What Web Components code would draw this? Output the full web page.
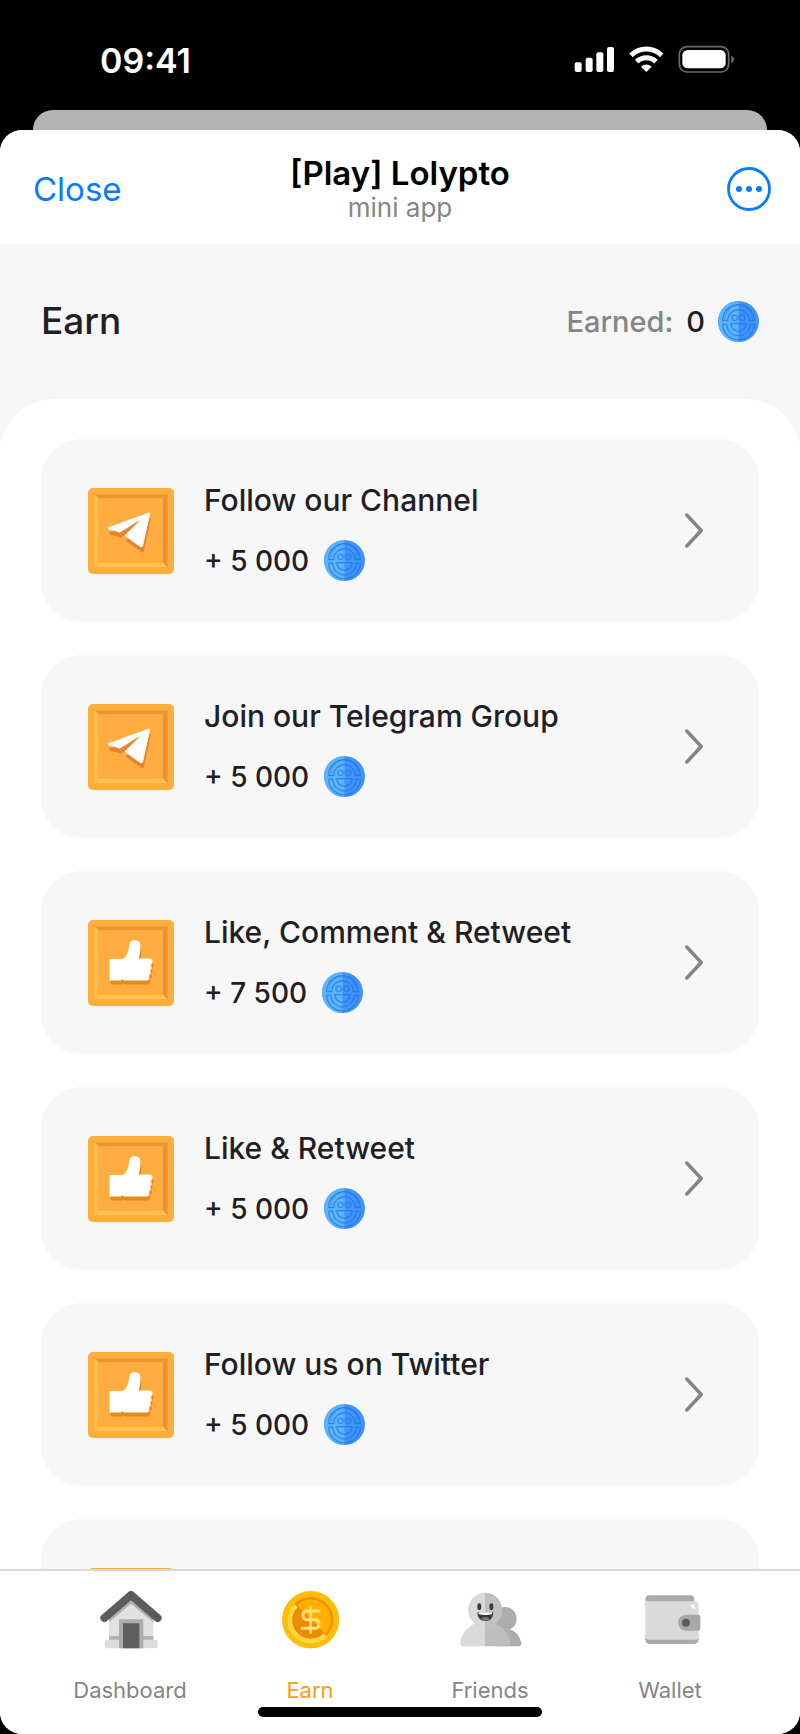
<!DOCTYPE html>
<html lang="en">
<head>
<meta charset="utf-8">
<meta name="viewport" content="width=device-width, initial-scale=1">
<title>[Play] Lolypto</title>
<style>
html, body {
  height: 100%;
  margin: 0;
  background: #000;
}

body {
  font-family: Inter, "Liberation Sans", sans-serif;
  color: #1f2023;
}
</style>
</head>
<body>
<lp-app>
  <lp-status-bar slot="status" time="09:41"></lp-status-bar>
  <lp-title-bar slot="title">
    [Play] Lolypto
    <span slot="subtitle">mini app</span>
  </lp-title-bar>
  <lp-earned slot="heading" amount="0">Earn</lp-earned>

  <lp-task icon="plane" reward="5 000">Follow our Channel</lp-task>
  <lp-task icon="plane" reward="5 000">Join our Telegram Group</lp-task>
  <lp-task icon="thumb" reward="7 500">Like, Comment &amp; Retweet</lp-task>
  <lp-task icon="thumb" reward="5 000">Like &amp; Retweet</lp-task>
  <lp-task icon="thumb" reward="5 000">Follow us on Twitter</lp-task>
  <lp-task icon="thumb" reward="5 000">Follow us</lp-task>

  <lp-tab slot="tabs" icon="house">Dashboard</lp-tab>
  <lp-tab slot="tabs" icon="money" active>Earn</lp-tab>
  <lp-tab slot="tabs" icon="friends">Friends</lp-tab>
  <lp-tab slot="tabs" icon="wallet">Wallet</lp-tab>
</lp-app>

<script>
// the square frame shared by all task icons
const tile = `
  <rect width="86" height="86" rx="5" fill="#fcae3c"/>
  <path d="M6.500 6.500H79.500L75 10.500H10.500Z" fill="#f0952f"/>
  <path d="M79.500 6.500V79L75 75V10.500Z" fill="#ee8f30"/>
  <path d="M6.500 6.500L10.500 10.500V75L6.500 79Z" fill="#ffbf4e"/>
  <path d="M6.500 79L10.500 75H75L79.500 79Z" fill="#ffc24c"/>
  <rect x="10.500" y="10.500" width="64.500" height="64.500" fill="#ffad40"/>`

const plane = 'M59.500 25Q62.500 23.500 62 26.500L55 58Q54.500 60 52.500 59L37.500 48.500Q36.500 47.500 37.500 46.500L53.500 31L32 44.500L21 41.500Q19 40 21 39Z'
const thumb = 'M22.500 39H35Q40 35 41 27Q41.500 20 46 20Q52.500 20 52.500 27Q52.500 34 50.500 38.500H61Q64.500 38.500 64.500 41.500Q64.500 44 62.500 45Q65 48 62 50.500Q64.500 53 61 55.500Q62.500 60.500 58 60.500H36Q34.500 58.500 33 60.500H22.500Q21.500 60.500 21.500 59V40Q21.500 39 22.500 39Z'

const icons = {
  plane: {
    box: '0 0 86 86',
    art: `${tile}<path d="${plane}" transform="translate(1 5)" fill="#e8852c"/><path d="${plane}" fill="#fff"/>`
  },
  thumb: {
    box: '0 0 86 86',
    art: `${tile}<path d="${thumb}" transform="translate(1 4)" fill="#e88a1c"/><path d="${thumb}" fill="#fff"/>`
  },
  coin: {
    box: '-20 -20 40 40',
    art: `
      <circle r="20" fill="#3f93fb"/>
      <path d="M0-20A20 20 0 0 0 0 20Z" fill="#5ab5fd"/>
      <g fill="none" stroke="#1f70dc" stroke-opacity=".65" stroke-width="1.300">
        <path d="M-15.500-1A15.500 15.500 0 0 1 15.500-1H10.500A10.500 10.500 0 0 0-10.500-1Z"/>
        <path d="M-13-3A13 13 0 0 1 13-3" stroke-opacity=".35"/>
        <path d="M-15.500 2.500A15.500 15.500 0 0 0 15.500 2.500H11.500A11.500 11.500 0 0 1-11.500 2.500Z"/>
        <path d="M-7.500 2H7.500A7.500 7.500 0 0 1-7.500 2Z"/>
        <circle cx="-3.700" cy="-3.500" r="2.700"/>
        <circle cx="3.700" cy="-3.500" r="2.700"/>
      </g>`
  },
  chevron: {
    box: '0 0 18 34',
    art: '<path d="M2 2L16 17L2 32" fill="none" stroke="#858585" stroke-width="3.400" stroke-linecap="round" stroke-linejoin="round"/>'
  },
  more: {
    box: '0 0 44 44',
    art: `
      <circle cx="22" cy="22" r="20.500" fill="none" stroke="#0a7aff" stroke-width="2.800"/>
      <g fill="#0a7aff"><circle cx="12" cy="22" r="3"/><circle cx="22" cy="22" r="3"/><circle cx="32" cy="22" r="3"/></g>`
  },
  signals: {
    box: '40 45 486 90',
    art: `
      <g fill="#fff">
        <rect x="42" y="97" width="21" height="29" rx="6"/>
        <rect x="75" y="83" width="21" height="43" rx="6"/>
        <rect x="107" y="67" width="21" height="59" rx="6"/>
        <rect x="139" y="51" width="21" height="75" rx="6"/>
        <path d="M257 126L241 110A23 23 0 0 1 273 110Z"/>
        <rect x="365" y="60" width="130" height="55" rx="16"/>
      </g>
      <g fill="none" stroke="#fff" stroke-width="15">
        <path d="M211 76A66 66 0 0 1 303 76"/>
        <path d="M228 95A42 42 0 0 1 286 95"/>
      </g>
      <rect x="356" y="50" width="148" height="76" rx="23" fill="none" stroke="#6b6b6b" stroke-width="5"/>
      <path d="M512 77Q520 80 520 88T512 99Z" fill="#6b6b6b"/>`
  },
  house: {
    box: '115 88 189 180',
    art: `
      <path d="M145 180L211 120L278 180V265H145Z" fill="#e2e2e2"/>
      <path d="M145 176L211 120L278 176V188L211 132L145 188Z" fill="#b0b0b0"/>
      <path d="M145 229H278V241H145Z" fill="#b5b5b5"/>
      <rect x="132" y="240" width="159" height="26" rx="6" fill="#dcdcdc"/>
      <path d="M175 179H248V266H175Z" fill="#adadad"/>
      <path d="M187 191H236V266H187Z" fill="#5f5f5f"/>
      <path d="M131 175L211 106L291 175" fill="none" stroke="#5c5c5c" stroke-width="24" stroke-linecap="round" stroke-linejoin="round"/>`
  },
  money: {
    box: '655 88 189 180',
    art: `
      <circle cx="750" cy="180" r="86" fill="#ffbd08"/>
      <circle cx="750" cy="180" r="68" fill="#ee9000"/>
      <path d="M708 137A60 60 0 0 1 793 222Z" fill="#ffb000"/>
      <path d="M708 137A60 60 0 0 0 793 222Z" fill="#ee8b00"/>
      <path d="M706 138A61 61 0 0 0 794 226" fill="none" stroke="#ffd63f" stroke-width="14"/>
      <path d="M775 154H737Q727 154 727 166T737 180H764Q775 180 775 193T764 206H724M750 142V218" fill="none" stroke="#ffdf70" stroke-width="9" stroke-linecap="round"/>`
  },
  friends: {
    box: '83 88 189 180',
    art: `
      <circle cx="221" cy="177" r="35" fill="#adadad"/>
      <path d="M190 208H232Q262 215 270 250Q270 260 261 260H190Z" fill="#adadad"/>
      <path d="M161 186C118 186 91 215 87 249Q87 260 98 260H161Z" fill="#dadada"/>
      <path d="M161 186C205 186 232 215 237 249Q237 260 226 260H161Z" fill="#bebebe"/>
      <circle cx="161" cy="150" r="51" fill="#dadada"/>
      <path d="M161 99A51 51 0 0 1 161 201Z" fill="#c0c0c0"/>
      <ellipse cx="144" cy="141" rx="6" ry="10" fill="#3a3a3a"/>
      <ellipse cx="180" cy="141" rx="6" ry="10" fill="#3a3a3a"/>
      <path d="M138 158H186Q185 184 162 184T138 158Z" fill="#383838"/>
      <path d="M142 158H182V164Q162 168 142 164Z" fill="#fff"/>
      <path d="M148 178Q162 166 176 178Q162 188 148 178Z" fill="#777"/>`
  },
  wallet: {
    box: '623 88 189 180',
    art: `
      <path d="M655 107H778Q789 107 789 119V136H642V120Q642 107 655 107Z" fill="#ababab"/>
      <path d="M642 225H802V238Q802 253 787 253H656Q642 253 642 238Z" fill="#ababab"/>
      <path d="M642 120Q646 125 655 125H788Q802 125 802 139V232Q802 240 794 240H652Q642 240 642 230Z" fill="#dadada"/>
      <path d="M778 135H787Q791 136 791 147Q782 149 780 141Z" fill="#fff"/>
      <path d="M764 165H800Q807 165 807 171V207Q807 213 800 213H764Q741 211 741 189T764 165Z" fill="#a8a8a8"/>
      <circle cx="764" cy="189" r="12" fill="#5c5c5c"/>`
  }
}

customElements.define('lp-icon',
  /**
   * Draws one of the icons above, in the size of its host.
   */
  class extends HTMLElement {
    constructor () {
      super()
      this.attachShadow({ mode: 'open' })
    }

    connectedCallback () {
      const { box, art } = icons[this.getAttribute('name')]
      this.shadowRoot.innerHTML = `
        <style>
        :host {
          display: block;
          flex: none;
        }

        svg {
          display: block;
          width: 100%;
          height: 100%;
        }
        </style>
        <svg viewBox="${box}" aria-hidden="true">${art}</svg>
      `
    }
  }
)

customElements.define('lp-status-bar',
  /**
   * Clock and signal icons.
   */
  class extends HTMLElement {
    constructor () {
      super()
      this.attachShadow({ mode: 'open' })
    }

    connectedCallback () {
      this.shadowRoot.innerHTML = `
        <style>
        :host {
          display: flex;
          align-items: center;
          justify-content: space-between;
          box-sizing: border-box;
          height: 110px;
          padding: 10px 64px 0 100px;
          color: #fff;
          font-size: 34px;
          font-weight: 600;
        }

        lp-icon {
          width: 162px;
          height: 30px;
        }
        </style>
        <time>${this.getAttribute('time')}</time>
        <lp-icon name="signals"></lp-icon>
      `
    }
  }
)

const titleBarTemplate = document.createElement('template')
titleBarTemplate.innerHTML = `
<style>
:host {
  display: grid;
  grid-template-columns: 1fr auto 1fr;
  align-items: center;
  padding: 24px 29px 20px;
  background: #fff;
}

button {
  padding: 0;
  border: 0;
  background: none;
  color: #0a7aff;
  font: inherit;
  font-size: 33px;
  line-height: 40px;
  cursor: pointer;
}

.close {
  justify-self: start;
  padding-left: 4px;
}

.more {
  justify-self: end;
}

.more lp-icon {
  width: 44px;
  height: 44px;
}

.titles {
  text-align: center;
}

h1 {
  margin: 0;
  color: #000;
  font-size: 33px;
  font-weight: 600;
  line-height: 38px;
}

p {
  margin: 0;
  color: #858585;
  font-size: 26px;
  line-height: 32px;
}
</style>

<button class="close" type="button">Close</button>
<div class="titles">
  <h1><slot></slot></h1>
  <p><slot name="subtitle"></slot></p>
</div>
<button class="more" type="button" aria-label="More"><lp-icon name="more"></lp-icon></button>
`

customElements.define('lp-title-bar',
  /**
   * Top of the sheet, with its two buttons.
   */
  class extends HTMLElement {
    constructor () {
      super()
      this.attachShadow({ mode: 'open' })
        .appendChild(titleBarTemplate.content.cloneNode(true))
    }
  }
)

customElements.define('lp-earned',
  /**
   * Page heading and the amount earned so far.
   */
  class extends HTMLElement {
    constructor () {
      super()
      this.attachShadow({ mode: 'open' })
    }

    connectedCallback () {
      this.shadowRoot.innerHTML = `
        <style>
        :host {
          display: flex;
          align-items: center;
          justify-content: space-between;
          padding: 52px 41px 53px;
        }

        h2 {
          margin: 0;
          font-size: 37px;
          font-weight: 500;
          line-height: 50px;
        }

        .total {
          display: flex;
          align-items: center;
          gap: 13px;
          font-size: 29px;
          font-weight: 500;
        }

        .label {
          color: #858585;
        }

        lp-icon {
          width: 41px;
          height: 41px;
        }
        </style>
        <h2><slot></slot></h2>
        <div class="total">
          <span class="label">Earned:</span>
          <span>${this.getAttribute('amount')}</span>
          <lp-icon name="coin"></lp-icon>
        </div>
      `
    }
  }
)

customElements.define('lp-task',
  /**
   * One task card. The title is slotted.
   */
  class extends HTMLElement {
    constructor () {
      super()
      this.attachShadow({ mode: 'open' })
    }

    connectedCallback () {
      this.shadowRoot.innerHTML = `
        <style>
        :host {
          display: block;
          flex: none;
        }

        a {
          display: flex;
          align-items: center;
          gap: 30px;
          padding: 41px 55px 41px 47px;
          border-radius: 40px;
          background: #f7f7f7;
          color: inherit;
          font-size: 30px;
          font-weight: 500;
          line-height: 40px;
          text-decoration: none;
        }

        .tile {
          width: 86px;
          height: 86px;
        }

        .text {
          display: flex;
          flex: 1;
          flex-direction: column;
          gap: 20px;
        }

        .reward {
          display: flex;
          align-items: center;
          gap: 15px;
          font-size: 28px;
        }

        .coin {
          width: 41px;
          height: 41px;
        }

        .chevron {
          width: 20px;
          height: 35px;
        }
        </style>
        <a href="#task">
          <lp-icon class="tile" name="${this.getAttribute('icon')}"></lp-icon>
          <span class="text">
            <span><slot></slot></span>
            <span class="reward">+ ${this.getAttribute('reward')} <lp-icon class="coin" name="coin"></lp-icon></span>
          </span>
          <lp-icon class="chevron" name="chevron"></lp-icon>
        </a>
      `
    }
  }
)

customElements.define('lp-tab',
  /**
   * A link in the bottom navigation.
   */
  class extends HTMLElement {
    constructor () {
      super()
      this.attachShadow({ mode: 'open' })
    }

    connectedCallback () {
      this.shadowRoot.innerHTML = `
        <style>
        :host {
          display: block;
          flex: 1;
        }

        a {
          display: flex;
          flex-direction: column;
          align-items: center;
          gap: 29px;
          color: #858585;
          font-size: 22px;
          line-height: 24px;
          text-decoration: none;
        }

        :host([active]) a {
          color: #f7a010;
        }

        lp-icon {
          width: 63px;
          height: 60px;
        }
        </style>
        <a href="#tab">
          <lp-icon name="${this.getAttribute('icon')}"></lp-icon>
          <slot></slot>
        </a>
      `
    }
  }
)

const appTemplate = document.createElement('template')
appTemplate.innerHTML = `
<style>
:host {
  display: flex;
  flex-direction: column;
  height: 100vh;
}

.behind {
  flex: none;
  height: 20px;
  margin: 0 33px;
  border-radius: 20px 20px 0 0;
  background: #b4b4b4;
}

.sheet {
  position: relative;
  display: flex;
  flex: 1;
  flex-direction: column;
  min-height: 0;
  overflow: hidden;
  border-radius: 22px;
  background: #f6f6f6;
}

main {
  display: flex;
  flex: 1;
  flex-direction: column;
  gap: 33px;
  min-height: 0;
  padding: 40px 41px 0;
  overflow: hidden;
  border-radius: 54px 54px 0 0;
  background: #fff;
}

nav {
  display: flex;
  padding: 18px 40px 32px;
  border-top: 2px solid #d8d8d8;
  background: #fff;
}

.home-bar {
  position: absolute;
  right: 0;
  bottom: 17px;
  left: 0;
  width: 284px;
  height: 10px;
  margin: 0 auto;
  border-radius: 5px;
  background: #000;
}
</style>

<slot name="status"></slot>
<div class="behind"></div>
<div class="sheet">
  <slot name="title"></slot>
  <slot name="heading"></slot>
  <main><slot></slot></main>
  <nav><slot name="tabs"></slot></nav>
  <div class="home-bar"></div>
</div>
`

customElements.define('lp-app',
  /**
   * The phone screen.
   */
  class extends HTMLElement {
    constructor () {
      super()
      this.attachShadow({ mode: 'open' })
        .appendChild(appTemplate.content.cloneNode(true))
    }
  }
)
</script>
</body>
</html>
